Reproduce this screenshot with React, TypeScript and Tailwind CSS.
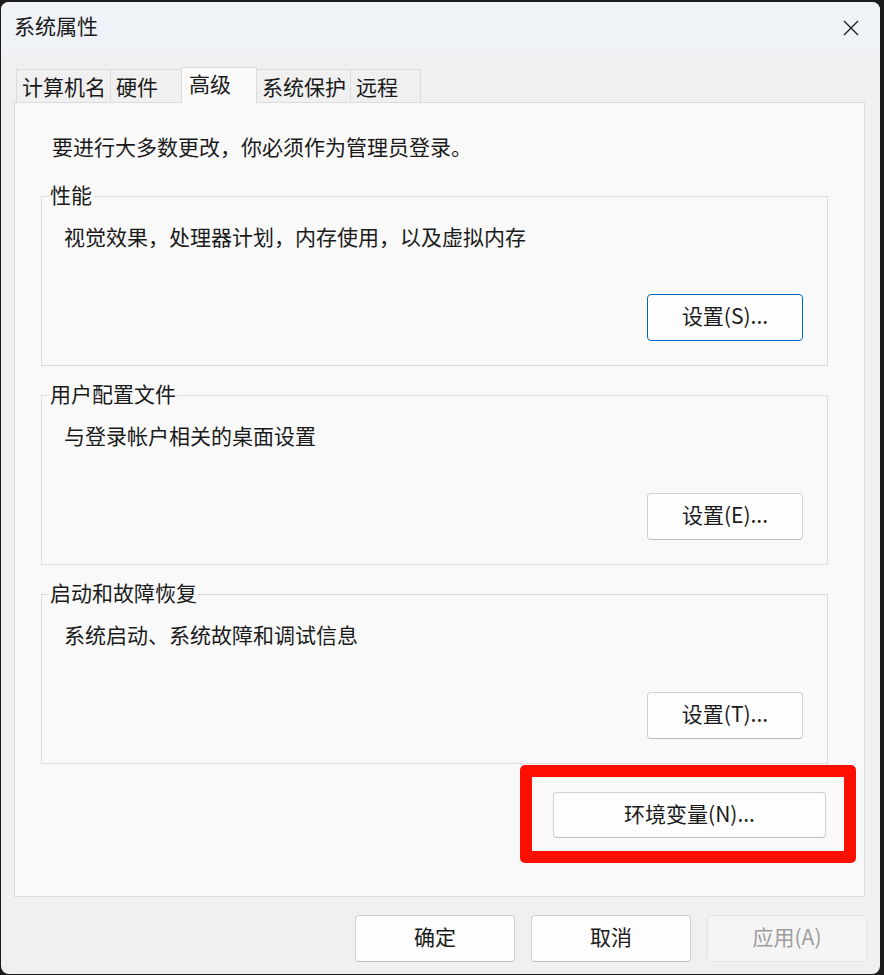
import type { ReactNode } from "react";

const FONT = { fontFamily: '"Noto Sans CJK SC", "Microsoft YaHei", sans-serif' };

const TABS = [
  { label: "计算机名", w: "w-[95px]" },
  { label: "硬件", w: "w-[72px]" },
  { label: "高级", w: "w-[76px]", active: true },
  { label: "系统保护", w: "w-[95px]" },
  { label: "远程", w: "w-[71px]" },
];

function Button({
  children,
  className = "",
  focused,
  disabled,
}: {
  children: ReactNode;
  className?: string;
  focused?: boolean;
  disabled?: boolean;
}) {
  let tone = "bg-[#fdfdfd] border-[#d0d0d0] border-b-[#bcbcbc] text-[#1a1a1a]";
  if (focused) tone = "bg-[#fdfdfd] border-[#0067c0] text-[#1a1a1a]";
  if (disabled) tone = "bg-[#f5f5f5] border-[#e5e5e5] text-[#9d9d9d]";
  return (
    <button
      className={`flex items-center justify-center rounded-[4px] border pb-[5px] text-[21px] leading-[30px] ${tone} ${className}`}
      disabled={disabled}
    >
      {children}
    </button>
  );
}

function GroupBox({
  title,
  text,
  button,
  focused,
}: {
  title: string;
  text: string;
  button: string;
  focused?: boolean;
}) {
  return (
    <div className="relative ml-[26px] flex h-[170px] w-[787px] flex-col border border-[#dcdcdc] pl-[22px] pr-[24px] pt-[24px]">
      <span className="absolute left-[7px] top-[-18px] bg-[#f9f9f9] px-px text-[21px] leading-[30px] text-[#1a1a1a]">
        {title}
      </span>
      <p className="text-[21px] leading-[30px] text-[#1a1a1a]">{text}</p>
      <div className="mt-[43px] flex justify-end">
        <Button focused={focused} className="h-[47px] w-[156px]">
          {button}
        </Button>
      </div>
    </div>
  );
}

export default function App() {
  return (
    <div className="h-[975px] w-[884px] overflow-hidden bg-[#1c1c1c] pl-px pt-[2px]" style={FONT}>
      <div className="flex h-[972px] w-[879px] flex-col overflow-hidden rounded-[8px] bg-[#f0f0f0]">
        {/* title bar */}
        <div className="flex h-[51px] shrink-0 items-center justify-between bg-[#eff3f7] pb-[5px] pl-[13px] pr-[21px]">
          <span className="text-[21px] leading-[30px] text-[#1a1a1a]">系统属性</span>
          <svg width="16" height="16" viewBox="0 0 16 16" className="mt-[5px] text-[#1a1a1a]">
            <path d="M1 1 L15 15 M15 1 L1 15" stroke="currentColor" strokeWidth="1.3" fill="none" />
          </svg>
        </div>

        <div className="flex flex-col px-[13px] pt-[14px]">
          {/* tabs */}
          <div className="flex h-[35px] items-end pl-[3px]">
            {TABS.map((t) =>
              t.active ? (
                <div
                  key={t.label}
                  className={`relative z-10 -mb-px -ml-px flex h-[36px] ${t.w} items-start border border-b-0 border-[#dcdcdc] bg-[#f9f9f9] pl-[7px] pt-0 text-[21px] leading-[30px] text-[#1a1a1a]`}
                >
                  {t.label}
                </div>
              ) : (
                <div
                  key={t.label}
                  className={`-ml-px flex h-[33px] ${t.w} items-start border border-b-0 border-[#dcdcdc] bg-[#f0f0f0] pl-[5px] pt-px text-[21px] leading-[30px] text-[#1a1a1a]`}
                >
                  {t.label}
                </div>
              ),
            )}
          </div>

          {/* tab panel */}
          <div className="flex h-[795px] w-[851px] flex-col border border-[#dcdcdc] bg-[#f9f9f9] pt-[28px]">
            <p className="pl-[37px] text-[21px] leading-[30px] text-[#1a1a1a]">
              要进行大多数更改，你必须作为管理员登录。
            </p>
            <div className="mt-[35px] flex flex-col gap-[29px]">
              <GroupBox
                title="性能"
                text="视觉效果，处理器计划，内存使用，以及虚拟内存"
                button="设置(S)..."
                focused
              />
              <GroupBox title="用户配置文件" text="与登录帐户相关的桌面设置" button="设置(E)..." />
              <GroupBox
                title="启动和故障恢复"
                text="系统启动、系统故障和调试信息"
                button="设置(T)..."
              />
            </div>
            <div className="mr-[8px] mt-px self-end rounded-[5px] border-[12px] border-[#fe0f00] pb-[13px] pl-[21px] pr-[18px] pt-[15px]">
              <Button className="h-[46px] w-[273px]">环境变量(N)...</Button>
            </div>
          </div>

          {/* dialog buttons */}
          <div className="flex justify-end gap-4 pt-[18px]">
            <Button className="h-[47px] w-[160px]">确定</Button>
            <Button className="h-[47px] w-[160px]">取消</Button>
            <Button className="h-[47px] w-[160px]" disabled>
              应用(A)
            </Button>
          </div>
        </div>
      </div>
    </div>
  );
}
